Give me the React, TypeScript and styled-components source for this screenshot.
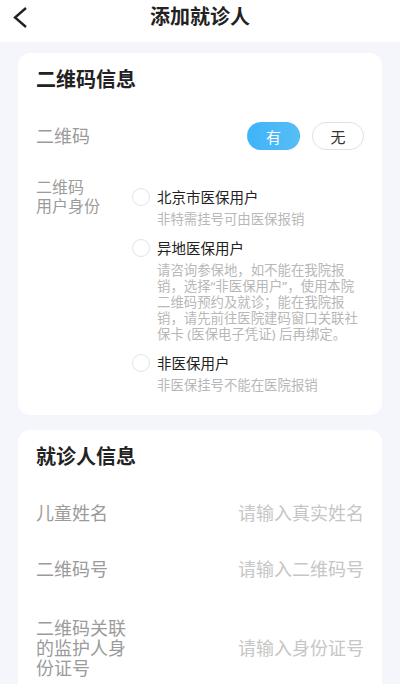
import styled, { createGlobalStyle } from 'styled-components';

const GlobalStyle = createGlobalStyle`
  html, body {
    margin: 0;
    padding: 0;
    background: #f5f6fb;
    font-family: "Noto Sans", "Noto Sans CJK SC", sans-serif;
    overflow: hidden;
  }
  * {
    box-sizing: border-box;
  }
`;

const Header = styled.header`
  height: 42px;
  padding-bottom: 8px;
  background: #fff;
  display: grid;
  grid-template-columns: 48px 1fr 48px;
  align-items: center;
`;

const BackButton = styled.button`
  border: none;
  background: none;
  padding: 0 0 0 12px;
  display: flex;
  align-items: center;
  cursor: pointer;
`;

const Title = styled.h1`
  margin: 0;
  text-align: center;
  font-size: 20px;
  line-height: 26px;
  font-weight: 700;
  color: #222;
`;

const Main = styled.main`
  padding: 11px 18px 20px;
  display: flex;
  flex-direction: column;
  gap: 15px;
`;

const Card = styled.section<{ $bottom?: number }>`
  background: #fff;
  border-radius: 12px;
  padding: 14px 18px ${(p) => p.$bottom ?? 0}px;
`;

const CardTitle = styled.h2`
  margin: 0;
  font-size: 20px;
  line-height: 26px;
  font-weight: 700;
  color: #222;
`;

const Label = styled.div<{ $size?: number; $lh?: number; $width?: number }>`
  font-size: ${(p) => p.$size ?? 18}px;
  line-height: ${(p) => p.$lh ?? 20}px;
  color: #9b9b9b;
  width: ${(p) => p.$width ?? 92}px;
  flex-shrink: 0;
`;

const QrRow = styled.div`
  margin-top: 21px;
  height: 44px;
  display: flex;
  align-items: center;
  justify-content: space-between;
`;

const Pills = styled.div`
  display: flex;
  gap: 12px;
`;

const Pill = styled.button<{ $active?: boolean }>`
  height: 28px;
  width: ${(p) => (p.$active ? 53 : 52)}px;
  border-radius: 14px;
  font-family: inherit;
  font-size: 15px;
  padding: 0;
  cursor: pointer;
  border: 1px solid ${(p) => (p.$active ? 'transparent' : '#e2e2e2')};
  color: ${(p) => (p.$active ? '#fff' : '#333')};
  background: ${(p) =>
    p.$active ? 'linear-gradient(90deg, #3fb4f8, #56bdf6)' : '#fff'};
`;

const IdentityRow = styled.div`
  margin-top: 20px;
  display: flex;
`;

const Options = styled.div`
  margin-top: 9px;
  flex: 1;
  display: flex;
  flex-direction: column;
  gap: 11px;
`;

const Option = styled.label`
  display: flex;
  gap: 7px;
  cursor: pointer;
`;

const Radio = styled.span`
  width: 18px;
  height: 18px;
  margin-top: 1px;
  border-radius: 50%;
  border: 1px solid #e4e4e4;
  flex-shrink: 0;
`;

const OptionText = styled.div`
  display: flex;
  flex-direction: column;
  gap: 4px;
`;

const OptionTitle = styled.div`
  font-size: 14.5px;
  line-height: 20px;
  color: #222;
`;

const OptionDesc = styled.div`
  font-size: 13.4px;
  line-height: 16px;
  color: #b8b8b8;
`;

const FieldList = styled.div`
  margin-top: 15px;
`;

const Field = styled.div<{ $pad?: number }>`
  display: flex;
  align-items: center;
  padding: ${(p) => p.$pad ?? 18}px 0;
`;

const Input = styled.input`
  flex: 1;
  min-width: 0;
  border: none;
  outline: none;
  padding: 0;
  background: transparent;
  text-align: right;
  font-family: inherit;
  font-size: 18px;
  line-height: 20px;
  color: #333;

  &::placeholder {
    color: #c6c6c6;
  }
`;

const options = [
  {
    title: '北京市医保用户',
    desc: ['非特需挂号可由医保报销'],
  },
  {
    title: '异地医保用户',
    desc: [
      '请咨询参保地，如不能在我院报',
      '销，选择“非医保用户”，使用本院',
      '二维码预约及就诊；能在我院报',
      '销，请先前往医院建码窗口关联社',
      '保卡 (医保电子凭证) 后再绑定。',
    ],
  },
  {
    title: '非医保用户',
    desc: ['非医保挂号不能在医院报销'],
  },
];

export default function App() {
  return (
    <>
      <GlobalStyle />
      <Header>
        <BackButton aria-label="返回">
          <svg width="16" height="24" viewBox="0 0 16 24">
            <path
              d="M14 3 L3 12.5 L14 22"
              fill="none"
              stroke="#222"
              strokeWidth="2.4"
              strokeLinejoin="miter"
            />
          </svg>
        </BackButton>
        <Title>添加就诊人</Title>
        <span />
      </Header>
      <Main>
        <Card $bottom={22}>
          <CardTitle>二维码信息</CardTitle>
          <QrRow>
            <Label>二维码</Label>
            <Pills>
              <Pill $active>有</Pill>
              <Pill>无</Pill>
            </Pills>
          </QrRow>
          <IdentityRow>
            <Label $size={16} $lh={19} $width={96}>
              二维码
              <br />
              用户身份
            </Label>
            <Options>
              {options.map((o) => (
                <Option key={o.title}>
                  <Radio />
                  <OptionText>
                    <OptionTitle>{o.title}</OptionTitle>
                    <OptionDesc>
                      {o.desc.map((line, i) => (
                        <div key={i}>{line}</div>
                      ))}
                    </OptionDesc>
                  </OptionText>
                </Option>
              ))}
            </Options>
          </IdentityRow>
        </Card>
        <Card $bottom={10}>
          <CardTitle>就诊人信息</CardTitle>
          <FieldList>
            <Field>
              <Label>儿童姓名</Label>
              <Input placeholder="请输入真实姓名" />
            </Field>
            <Field>
              <Label>二维码号</Label>
              <Input placeholder="请输入二维码号" />
            </Field>
            <Field $pad={21}>
              <Label>二维码关联的监护人身份证号</Label>
              <Input placeholder="请输入身份证号" />
            </Field>
          </FieldList>
        </Card>
      </Main>
    </>
  );
}
